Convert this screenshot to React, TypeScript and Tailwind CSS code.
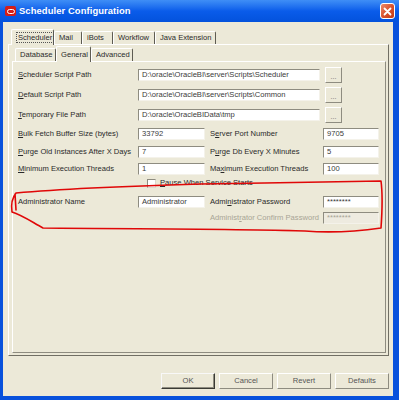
import React from "react";

const Input = ({ w, value, disabled }: { w: number; value?: string; disabled?: boolean }) => (
  <div
    style={{ width: w }}
    className={`h-[12px] border border-t-[#8E8C80] border-l-[#8E8C80] border-r-[#F4F2EA] border-b-[#F4F2EA] flex items-center pl-[3px] overflow-hidden whitespace-nowrap ${
      disabled ? "bg-[#EEEBE0] text-[#A8A596]" : "bg-white text-[#3A3A3A]"
    }`}
  >
    {value}
  </div>
);

const Browse = () => (
  <div className="w-[17px] h-[16px] bg-[#ECE9D8] border border-t-white border-l-white border-r-[#8E8C80] border-b-[#8E8C80] flex items-end justify-center pb-[2px] text-[7px] leading-none text-[#666]">
    ...
  </div>
);

const Btn = ({ label, def }: { label: string; def?: boolean }) => (
  <div
    className={`w-[54px] h-[16px] flex items-center justify-center text-[#555] bg-[#ECE9D8] border ${
      def
        ? "border-t-[#F8F8F8] border-l-[#F8F8F8] border-r-[#3A3A34] border-b-[#3A3A34] shadow-[inset_-1px_-1px_0_#8E8C80]"
        : "border-t-white border-l-white border-r-[#8E8C80] border-b-[#8E8C80]"
    }`}
  >
    {label}
  </div>
);

const Tab = ({ label, w, sel }: { label: React.ReactNode; w: number; sel?: boolean }) => (
  <div
    style={{ width: w }}
    className={`relative flex items-center pl-[4px] whitespace-nowrap bg-[#ECE9D8] border-t border-l border-r border-t-white border-l-white border-r-[#5E5C52] rounded-t-[2px] ${
      sel ? "h-[16px] -mb-[1px] z-10" : "h-[13px]"
    }`}
  >
    {label}
  </div>
);

export default function App() {
  return (
    <div className="relative w-[399px] h-[400px] flex flex-col bg-[#0851DC] font-['Liberation_Sans',Arial,sans-serif] text-[7.6px] text-[#2A2A2A] overflow-hidden">
      {/* Title bar */}
      <div className="h-[22px] shrink-0 flex items-center bg-gradient-to-b from-[#3F8EF6] via-[#0A5CEA] to-[#0452DC]">
        <div className="ml-[5px] w-[11px] h-[10px] bg-[#D41E1A] rounded-[2px] flex items-center justify-center">
          <div className="w-[8px] h-[5px] border border-white rounded-full" />
        </div>
        <span className="ml-[3px] text-white font-bold text-[9.4px] tracking-[0.1px]">Scheduler Configuration</span>
        <div className="ml-auto mr-[4px] w-[15px] h-[16px] rounded-[3px] border border-white bg-gradient-to-br from-[#EB8A6B] via-[#D9522D] to-[#C23A14] flex items-center justify-center">
          <svg width="9" height="9" viewBox="0 0 9 9">
            <path d="M1.5 1.5 L7.5 7.5 M7.5 1.5 L1.5 7.5" stroke="white" strokeWidth="1.8" strokeLinecap="round" />
          </svg>
        </div>
      </div>

      {/* Body */}
      <div className="flex-1 ml-[3px] mr-[6px] mb-[4px] bg-[#ECE9D8] flex flex-col">
        {/* Outer tabs */}
        <div className="flex items-end h-[15px] mt-[7px] ml-[8px]">
          <Tab
            w={43}
            sel
            label={
              <span className="border border-dotted border-[#555] px-[1px] leading-[9px]">
                Scheduler
              </span>
            }
          />
          <Tab w={28} label="Mail" />
          <Tab w={31} label="iBots" />
          <Tab w={42} label="Workflow" />
          <Tab w={61} label="Java Extension" />
        </div>

        {/* Outer panel */}
        <div className="ml-[5px] w-[381px] h-[312px] border border-t-white border-l-white border-r-[#716F64] border-b-[#716F64] flex flex-col">
          {/* Inner tabs */}
          <div className="flex items-end h-[15px] mt-[1px] ml-[6px]">
            <Tab w={41} label="Database" />
            <Tab w={35} sel label="General" />
            <Tab w={42} label="Advanced" />
          </div>

          {/* Inner panel */}
          <div className="ml-[3px] w-[374px] h-[292px] border border-t-white border-l-white border-r-[#8E8C80] border-b-[#8E8C80] flex flex-col pl-[5px]">
            <div className="flex items-center h-[16px] mt-[5px]">
              <div className="w-[120px]"><u>S</u>cheduler Script Path</div>
              <Input w={182} value="D:\oracle\OracleBI\server\Scripts\Scheduler" />
              <div className="w-[5px]" />
              <Browse />
            </div>
            <div className="flex items-center h-[16px] mt-[4px]">
              <div className="w-[120px]"><u>D</u>efault Script Path</div>
              <Input w={182} value="D:\oracle\OracleBI\server\Scripts\Common" />
              <div className="w-[5px]" />
              <Browse />
            </div>
            <div className="flex items-center h-[16px] mt-[4px]">
              <div className="w-[120px]"><u>T</u>emporary File Path</div>
              <Input w={182} value="D:\oracle\OracleBIData\tmp" />
              <div className="w-[5px]" />
              <Browse />
            </div>
            <div className="flex items-center h-[13px] mt-[4px]">
              <div className="w-[120px]"><u>B</u>ulk Fetch Buffer Size (bytes)</div>
              <Input w={67} value="33792" />
              <div className="w-[5px]" />
              <div className="w-[113px]">S<u>e</u>rver Port Number</div>
              <Input w={56} value="9705" />
            </div>
            <div className="flex items-center h-[13px] mt-[5px]">
              <div className="w-[120px]"><u>P</u>urge Old Instances After X Days</div>
              <Input w={67} value="7" />
              <div className="w-[5px]" />
              <div className="w-[113px]">P<u>u</u>rge Db Every X Minutes</div>
              <Input w={56} value="5" />
            </div>
            <div className="flex items-center h-[13px] mt-[4px]">
              <div className="w-[120px]"><u>M</u>inimum Execution Threads</div>
              <Input w={67} value="1" />
              <div className="w-[5px]" />
              <div className="w-[113px]">Ma<u>x</u>imum Execution Threads</div>
              <Input w={56} value="100" />
            </div>
            <div className="flex items-center h-[10px] mt-[3px]">
              <div className="w-[129px]" />
              <div className="w-[9px] h-[9px] bg-white border border-t-[#8E8C80] border-l-[#8E8C80] border-r-[#DCD9CC] border-b-[#DCD9CC]" />
              <div className="ml-[4px]"><u>P</u>ause When Service Starts</div>
            </div>
            <div className="flex items-center h-[13px] mt-[7px]">
              <div className="w-[120px]">Administrator Name</div>
              <Input w={67} value="Administrator" />
              <div className="w-[5px]" />
              <div className="w-[113px]">Admi<u>n</u>istrator Password</div>
              <Input w={56} value="********" />
            </div>
            <div className="flex items-center h-[13px] mt-[3px]">
              <div className="w-[192px]" />
              <div className="w-[113px] text-[#A8A596]">Administ<u>r</u>ator Confirm Password</div>
              <Input w={56} value="********" disabled />
            </div>
          </div>
        </div>

        {/* Buttons */}
        <div className="flex justify-end gap-[4px] mt-[17px] pr-[4px]">
          <Btn label="OK" def />
          <Btn label="Cancel" />
          <Btn label="Revert" />
          <Btn label="Defaults" />
        </div>
      </div>

      {/* Red annotation */}
      <svg className="absolute inset-0 pointer-events-none" width="399" height="400" viewBox="0 0 399 400">
        <path
          d="M16 193 C 60 189, 130 186, 200 184 C 260 183, 330 182, 381 181 C 383 196, 382 214, 381 228 C 360 231, 330 233, 305 231 C 260 229, 150 229, 43 228 C 32 222, 22 215, 12 212 C 11 205, 12 198, 16 193 M15 194 L16 210"
          fill="none"
          stroke="#E00808"
          strokeWidth="1.6"
          strokeLinejoin="round"
          strokeLinecap="round"
        />
      </svg>
    </div>
  );
}
